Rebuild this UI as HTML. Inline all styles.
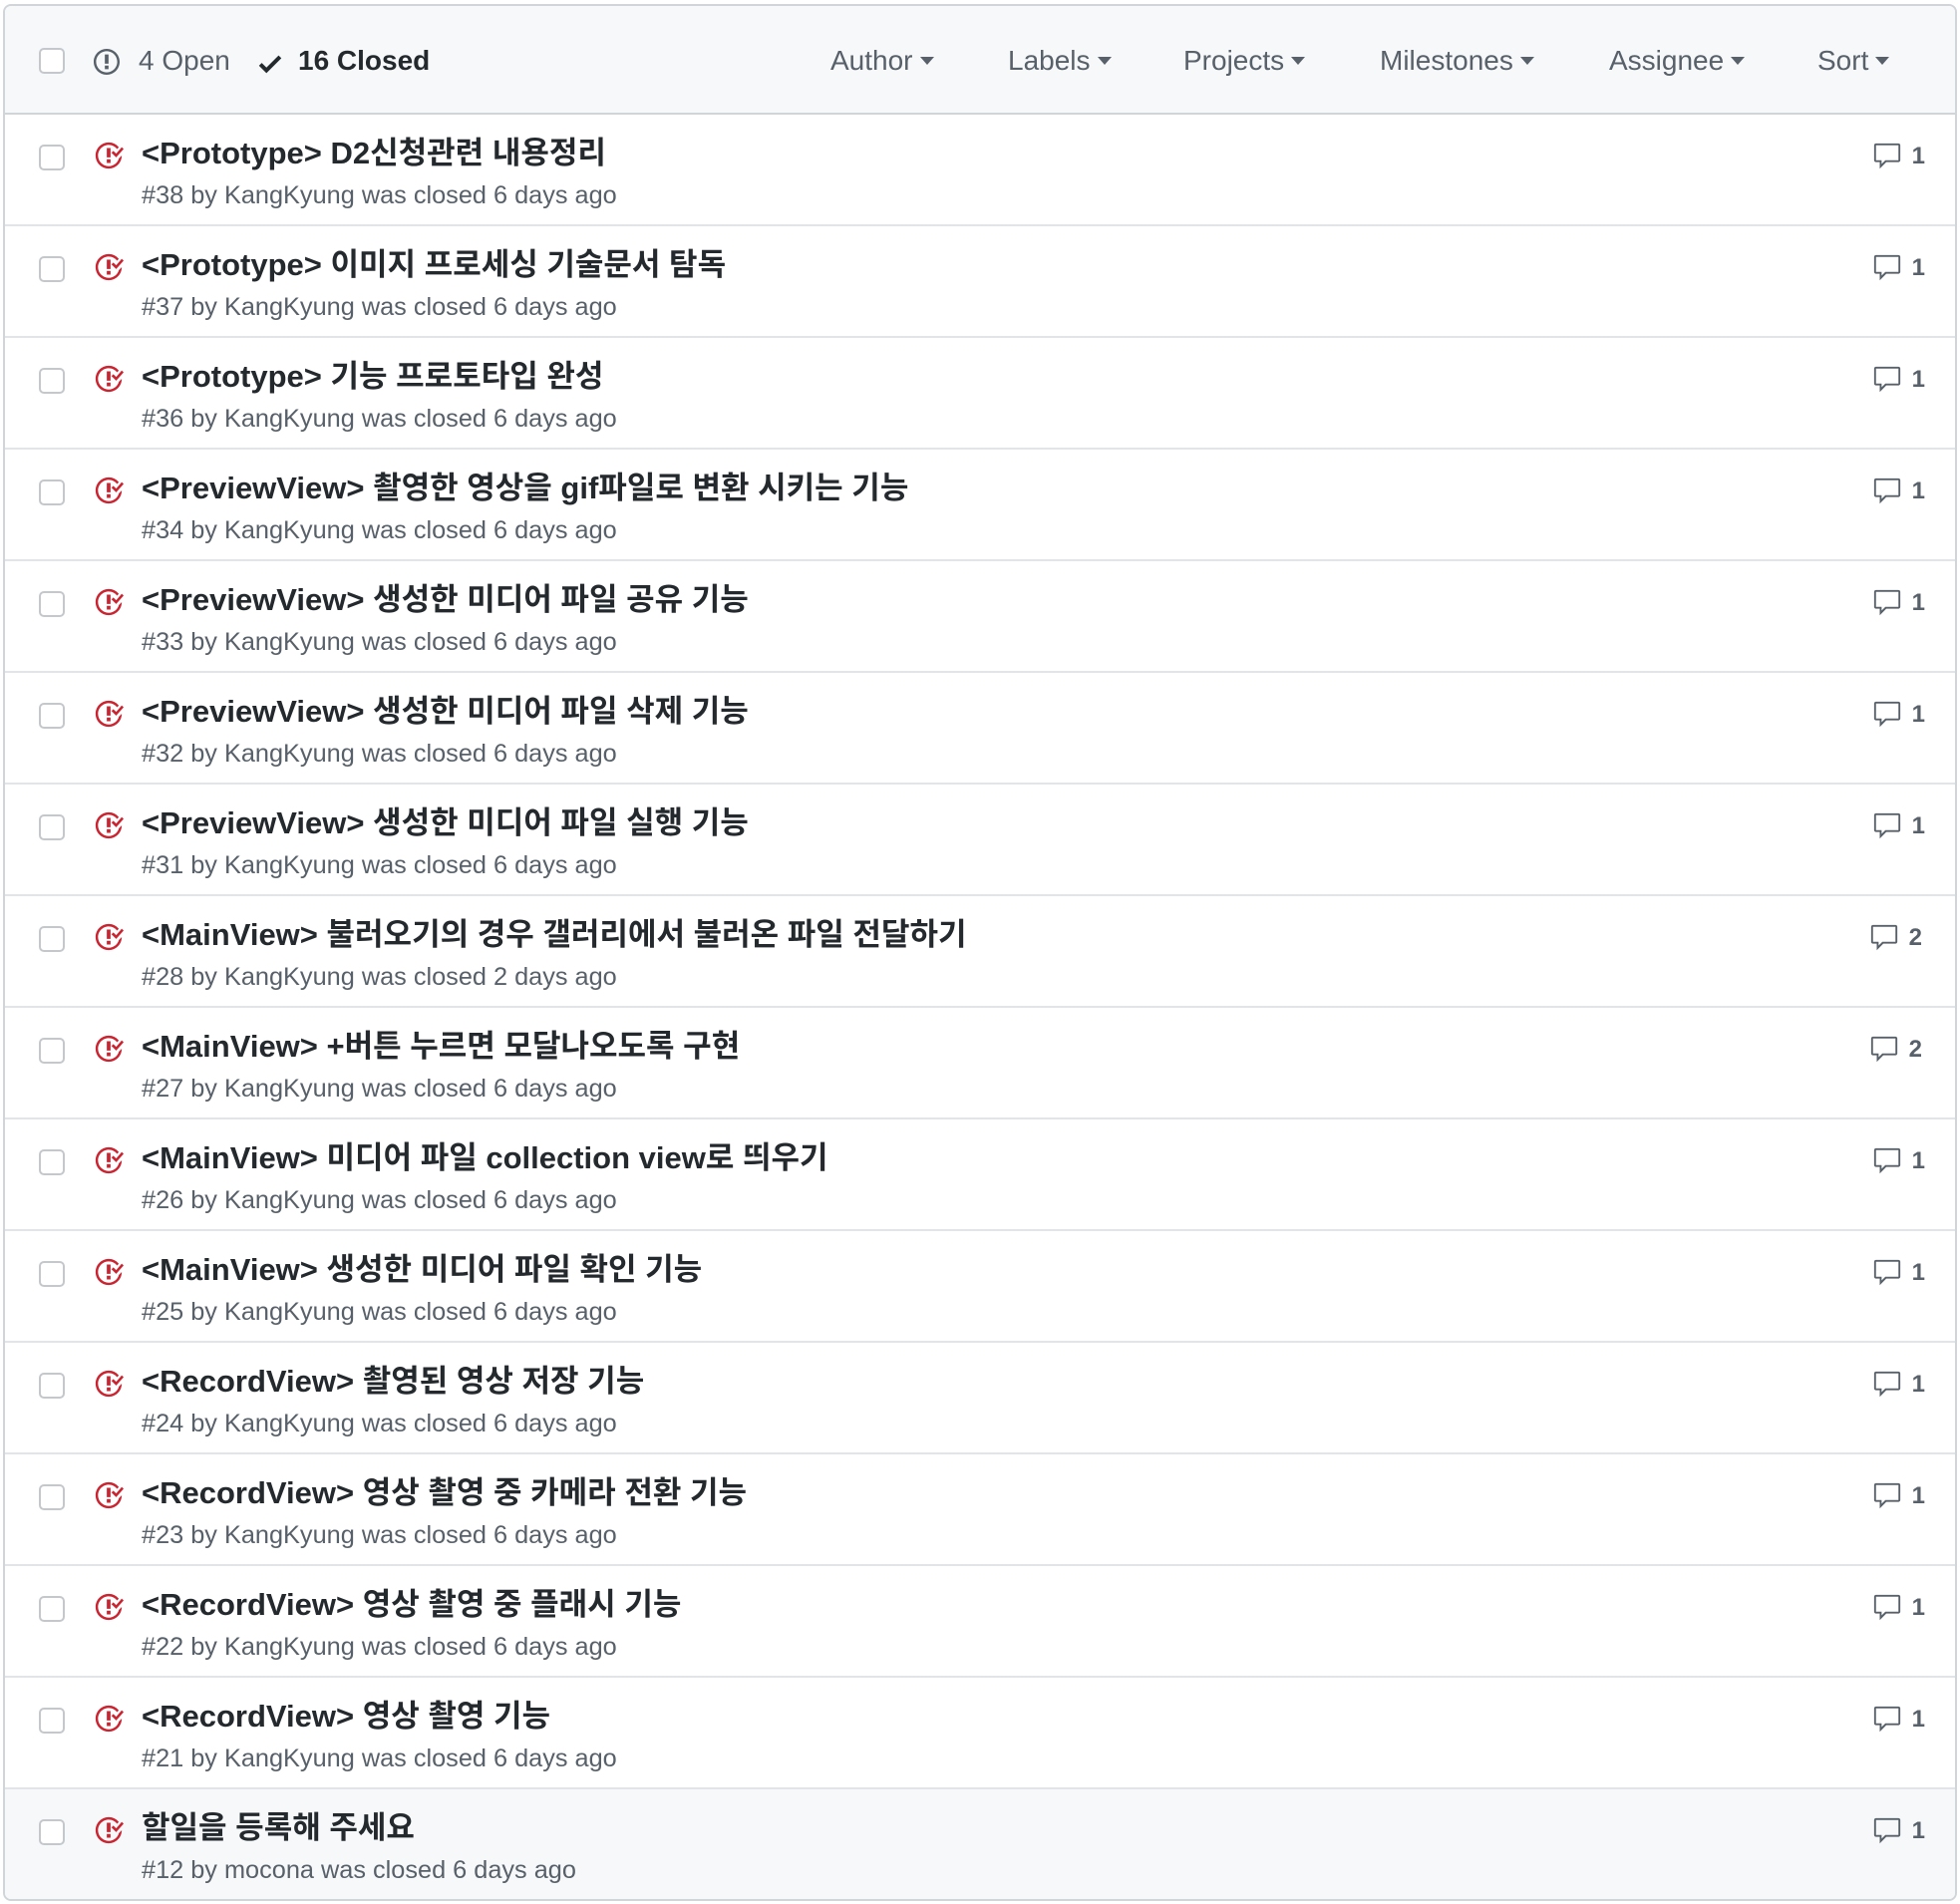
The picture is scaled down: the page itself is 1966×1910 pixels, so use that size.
<!DOCTYPE html>
<html><head><meta charset="utf-8"><style>
*{margin:0;padding:0;box-sizing:border-box}
body{width:1966px;height:1910px;background:#fff;font-family:"Liberation Sans","Noto Sans CJK KR",sans-serif;position:relative;overflow:hidden}
.box{position:absolute;left:3px;top:4px;width:1960px;height:1903px;border:2px solid #d1d5da;border-radius:8px;overflow:hidden}
.hdr{position:absolute;left:0;top:0;width:100%;height:109px;background:#f6f8fa;border-bottom:2px solid #d1d5da}
.cb{position:absolute;left:34px;width:26px;height:26px;border:2px solid #c4c8cc;border-radius:5px;background:#fff}
.ht{position:absolute;top:38px;font-size:28px;line-height:34px;color:#586069;white-space:nowrap}
.car{display:inline-block;width:0;height:0;border-left:7px solid transparent;border-right:7px solid transparent;border-top:8px solid #586069;vertical-align:middle;margin-left:7px;margin-top:-4px}
.row{position:absolute;left:0;width:100%;height:112px;border-bottom:2px solid #e1e4e8}
.row .cb{top:30px}
.ic{position:absolute;left:89px;top:26px}
.t{position:absolute;left:137px;top:19px;font-size:31px;font-weight:bold;color:#24292e;white-space:nowrap;line-height:40px}
.m{position:absolute;left:137px;top:66px;font-size:25.3px;color:#586069;white-space:nowrap;line-height:30px}
.cm{position:absolute;right:30px;top:27px;font-size:24px;font-weight:bold;color:#586069;display:flex;align-items:center;gap:10px}
</style></head><body>
<svg width="0" height="0" style="position:absolute"><defs>
<symbol id="cl" viewBox="0 0 16 16"><path fill="#cb2431" d="M7 10h2v2H7v-2zm2-6H7v5h2V4zm1.5 1.5l-1 1L12 9l4-4.5-1-1L12 7l-1.5-1.5zM8 13.7A5.710 5.710 0 0 1 2.3 8c0-3.140 2.560-5.700 5.700-5.700 1.830 0 3.450.880 4.500 2.200l.920-.920A6.947 6.947 0 0 0 8 1C4.140 1 1 4.140 1 8s3.140 7 7 7 7-3.140 7-7l-1.520 1.520c-.660 2.410-2.860 4.190-5.480 4.190v-.010z"/></symbol>
<symbol id="cm" viewBox="0 0 16 16"><path fill="#586069" d="M14 1H2c-.55 0-1 .45-1 1v8c0 .55.45 1 1 1h2v3.5L7.5 11H14c.55 0 1-.45 1-1V2c0-.55-.45-1-1-1zm0 9H7l-2 2v-2H2V2h12v8z"/></symbol>
</defs></svg>
<div class="box">
<div class="hdr">
<div class="cb" style="top:42px"></div>
<svg style="position:absolute;left:89px;top:41px" width="26" height="30" viewBox="0 0 14 16"><path fill="#586069" d="M7 2.3c3.14 0 5.7 2.56 5.7 5.7s-2.56 5.7-5.7 5.7A5.710 5.710 0 0 1 1.3 8c0-3.140 2.560-5.700 5.700-5.700zM7 1C3.140 1 0 4.140 0 8s3.140 7 7 7 7-3.140 7-7-3.140-7-7-7zm1 3H6v5h2V4zm0 6H6v2h2v-2z"/></svg>
<div class="ht" style="left:134px">4 Open</div>
<svg style="position:absolute;left:254px;top:43px" width="24" height="30" viewBox="0 0 12 16"><path fill="#24292e" d="M12 5l-8 8-4-4 1.5-1.5L4 10l6.5-6.5L12 5z"/></svg>
<div class="ht" style="left:294px;color:#24292e;font-weight:bold">16 Closed</div>
<div class="ht" style="left:828px">Author<span class="car"></span></div>
<div class="ht" style="left:1006px">Labels<span class="car"></span></div>
<div class="ht" style="left:1182px">Projects<span class="car"></span></div>
<div class="ht" style="left:1379px">Milestones<span class="car"></span></div>
<div class="ht" style="left:1609px">Assignee<span class="car"></span></div>
<div class="ht" style="left:1818px">Sort<span class="car"></span></div>
</div>

<div class="row" style="top:109px"><div class="cb"></div><svg class="ic" width="30" height="30"><use href="#cl"/></svg><div class="t">&lt;Prototype&gt; D2신청관련 내용정리</div><div class="m">#38 by KangKyung was closed 6 days ago</div><div class="cm"><svg width="30" height="30"><use href="#cm"/></svg>1</div></div>
<div class="row" style="top:221px"><div class="cb"></div><svg class="ic" width="30" height="30"><use href="#cl"/></svg><div class="t">&lt;Prototype&gt; 이미지 프로세싱 기술문서 탐독</div><div class="m">#37 by KangKyung was closed 6 days ago</div><div class="cm"><svg width="30" height="30"><use href="#cm"/></svg>1</div></div>
<div class="row" style="top:333px"><div class="cb"></div><svg class="ic" width="30" height="30"><use href="#cl"/></svg><div class="t">&lt;Prototype&gt; 기능 프로토타입 완성</div><div class="m">#36 by KangKyung was closed 6 days ago</div><div class="cm"><svg width="30" height="30"><use href="#cm"/></svg>1</div></div>
<div class="row" style="top:445px"><div class="cb"></div><svg class="ic" width="30" height="30"><use href="#cl"/></svg><div class="t">&lt;PreviewView&gt; 촬영한 영상을 gif파일로 변환 시키는 기능</div><div class="m">#34 by KangKyung was closed 6 days ago</div><div class="cm"><svg width="30" height="30"><use href="#cm"/></svg>1</div></div>
<div class="row" style="top:557px"><div class="cb"></div><svg class="ic" width="30" height="30"><use href="#cl"/></svg><div class="t">&lt;PreviewView&gt; 생성한 미디어 파일 공유 기능</div><div class="m">#33 by KangKyung was closed 6 days ago</div><div class="cm"><svg width="30" height="30"><use href="#cm"/></svg>1</div></div>
<div class="row" style="top:669px"><div class="cb"></div><svg class="ic" width="30" height="30"><use href="#cl"/></svg><div class="t">&lt;PreviewView&gt; 생성한 미디어 파일 삭제 기능</div><div class="m">#32 by KangKyung was closed 6 days ago</div><div class="cm"><svg width="30" height="30"><use href="#cm"/></svg>1</div></div>
<div class="row" style="top:781px"><div class="cb"></div><svg class="ic" width="30" height="30"><use href="#cl"/></svg><div class="t">&lt;PreviewView&gt; 생성한 미디어 파일 실행 기능</div><div class="m">#31 by KangKyung was closed 6 days ago</div><div class="cm"><svg width="30" height="30"><use href="#cm"/></svg>1</div></div>
<div class="row" style="top:893px"><div class="cb"></div><svg class="ic" width="30" height="30"><use href="#cl"/></svg><div class="t">&lt;MainView&gt; 불러오기의 경우 갤러리에서 불러온 파일 전달하기</div><div class="m">#28 by KangKyung was closed 2 days ago</div><div class="cm" style="right:33px"><svg width="30" height="30"><use href="#cm"/></svg>2</div></div>
<div class="row" style="top:1005px"><div class="cb"></div><svg class="ic" width="30" height="30"><use href="#cl"/></svg><div class="t">&lt;MainView&gt; +버튼 누르면 모달나오도록 구현</div><div class="m">#27 by KangKyung was closed 6 days ago</div><div class="cm" style="right:33px"><svg width="30" height="30"><use href="#cm"/></svg>2</div></div>
<div class="row" style="top:1117px"><div class="cb"></div><svg class="ic" width="30" height="30"><use href="#cl"/></svg><div class="t">&lt;MainView&gt; 미디어 파일 collection view로 띄우기</div><div class="m">#26 by KangKyung was closed 6 days ago</div><div class="cm"><svg width="30" height="30"><use href="#cm"/></svg>1</div></div>
<div class="row" style="top:1229px"><div class="cb"></div><svg class="ic" width="30" height="30"><use href="#cl"/></svg><div class="t">&lt;MainView&gt; 생성한 미디어 파일 확인 기능</div><div class="m">#25 by KangKyung was closed 6 days ago</div><div class="cm"><svg width="30" height="30"><use href="#cm"/></svg>1</div></div>
<div class="row" style="top:1341px"><div class="cb"></div><svg class="ic" width="30" height="30"><use href="#cl"/></svg><div class="t">&lt;RecordView&gt; 촬영된 영상 저장 기능</div><div class="m">#24 by KangKyung was closed 6 days ago</div><div class="cm"><svg width="30" height="30"><use href="#cm"/></svg>1</div></div>
<div class="row" style="top:1453px"><div class="cb"></div><svg class="ic" width="30" height="30"><use href="#cl"/></svg><div class="t">&lt;RecordView&gt; 영상 촬영 중 카메라 전환 기능</div><div class="m">#23 by KangKyung was closed 6 days ago</div><div class="cm"><svg width="30" height="30"><use href="#cm"/></svg>1</div></div>
<div class="row" style="top:1565px"><div class="cb"></div><svg class="ic" width="30" height="30"><use href="#cl"/></svg><div class="t">&lt;RecordView&gt; 영상 촬영 중 플래시 기능</div><div class="m">#22 by KangKyung was closed 6 days ago</div><div class="cm"><svg width="30" height="30"><use href="#cm"/></svg>1</div></div>
<div class="row" style="top:1677px"><div class="cb"></div><svg class="ic" width="30" height="30"><use href="#cl"/></svg><div class="t">&lt;RecordView&gt; 영상 촬영 기능</div><div class="m">#21 by KangKyung was closed 6 days ago</div><div class="cm"><svg width="30" height="30"><use href="#cm"/></svg>1</div></div>
<div class="row" style="top:1789px;background:#f6f8fa;border-bottom:none"><div class="cb"></div><svg class="ic" width="30" height="30"><use href="#cl"/></svg><div class="t">할일을 등록해 주세요</div><div class="m">#12 by mocona was closed 6 days ago</div><div class="cm"><svg width="30" height="30"><use href="#cm"/></svg>1</div></div>
</div>
</body></html>
